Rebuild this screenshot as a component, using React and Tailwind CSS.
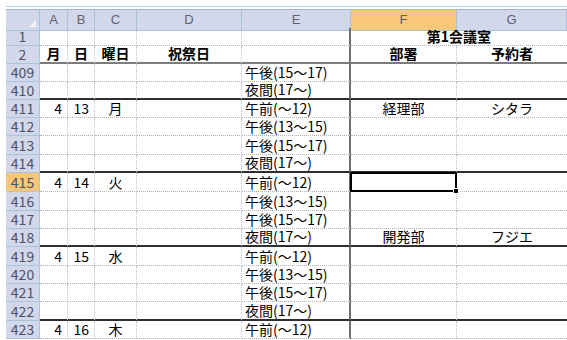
import React from 'react';

const grid = 'grid grid-cols-[34px_28px_27px_42px_105px_109px_106px_1fr]';

const rows = [
    { n: '409', e: '午後(15～17)' },
    { n: '410', e: '夜間(17～)', thick: true },
    { n: '411', a: '4', b: '13', c: '月', e: '午前(～12)', f: '経理部', g: 'シタラ' },
    { n: '412', e: '午後(13～15)' },
    { n: '413', e: '午後(15～17)', tall: true },
    { n: '414', e: '夜間(17～)', thick: true },
    { n: '415', a: '4', b: '14', c: '火', e: '午前(～12)', selected: true, tall: true },
    { n: '416', e: '午後(13～15)', tall: true },
    { n: '417', e: '午後(15～17)' },
    { n: '418', e: '夜間(17～)', f: '開発部', g: 'フジエ', thick: true },
    { n: '419', a: '4', b: '15', c: '水', e: '午前(～12)', tall: true },
    { n: '420', e: '午後(13～15)' },
    { n: '421', e: '午後(15～17)' },
    { n: '422', e: '夜間(17～)', thick: true, tall: true },
    { n: '423', a: '4', b: '16', c: '木', e: '午前(～12)' },
];

function RowHead({ children, active }) {
    return (
        <div
            className={`flex items-end justify-center pb-[2px] leading-none text-[14px] text-[#4c5268] border-r border-b border-[#a9c3dc] ${active ? 'bg-[#f8c777]' : 'bg-[#d3d7ea]'
                }`}
        >
            {children}
        </div>
    );
}

function Cell({ children, align = 'center', bottom, right = 'light', bold, className = '' }) {
    const alignCls = align === 'right' ? 'justify-end pr-[5px]' : align === 'left' ? 'justify-start pl-[3px]' : 'justify-center';
    const bottomCls =
        bottom === 'thick'
            ? 'border-b-2 [border-bottom-style:solid] border-b-[#2e2e2e]'
            : bottom === 'header'
                ? 'border-b-2 [border-bottom-style:solid] border-b-[#7c7c7c]'
                : 'border-b [border-bottom-style:dotted] border-b-[#b2b2b2]';
    const rightCls =
        right === 'dark'
            ? 'border-r-2 [border-right-style:solid] border-r-[#707070]'
            : right === 'none'
                ? ''
                : 'border-r [border-right-style:dotted] border-r-[#b7bfd6]';
    return (
        <div
            className={`relative flex items-end pb-[2px] leading-none whitespace-nowrap ${alignCls} ${bottomCls} ${rightCls} ${bold ? 'font-bold' : ''} ${className}`}
        >
            {children}
        </div>
    );
}

export default function App() {
    return (
        <div className="w-[567px] h-[340px] overflow-hidden bg-white pt-[6px] pl-[6px] text-[14px] text-black font-['Noto_Sans_CJK_JP',sans-serif]">
            <div className="h-px bg-[#a6d6ea]" />
            <div className="h-[2px]" />

            {/* column headers */}
            <div className={`${grid} h-[19px] border-t border-[#a7b3d9] text-[13px] text-[#5d6275] font-['Liberation_Sans',sans-serif]`}>
                <div className="relative bg-[#d3d7ea] border-r border-b border-[#a9c3dc]">
                    <div className="absolute right-[3px] bottom-[3px] w-0 h-0 border-l-[7px] border-l-transparent border-b-[7px] border-b-[#f4f5fb]" />
                </div>
                {['A', 'B', 'C', 'D', 'E', 'F', 'G'].map((c) => (
                    <div
                        key={c}
                        className={`flex items-center justify-center border-r border-b border-[#a9c3dc] ${c === 'F' ? 'bg-[#f8c777]' : 'bg-[#d3d7ea]'
                            }`}
                    >
                        {c}
                    </div>
                ))}
            </div>

            {/* row 1 */}
            <div className={`${grid} h-[18px]`}>
                <RowHead>1</RowHead>
                <Cell />
                <Cell />
                <Cell />
                <Cell />
                <Cell right="dark" />
                <Cell bold right="none" className="col-span-2">第1会議室</Cell>
            </div>

            {/* row 2 */}
            <div className={`${grid} h-[18px]`}>
                <RowHead>2</RowHead>
                <Cell bold bottom="header">月</Cell>
                <Cell bold bottom="header">日</Cell>
                <Cell bold bottom="header">曜日</Cell>
                <Cell bold bottom="header">祝祭日</Cell>
                <Cell bottom="header" right="dark" />
                <Cell bold bottom="header">部署</Cell>
                <Cell bold bottom="header" right="none">予約者</Cell>
            </div>

            {rows.map((r) => {
                const bottom = r.thick ? 'thick' : undefined;
                return (
                    <div key={r.n} className={`${grid} ${r.tall ? 'h-[19px]' : 'h-[18px]'}`}>
                        <RowHead active={r.selected}>{r.n}</RowHead>
                        <Cell align="right" bottom={bottom}>{r.a}</Cell>
                        <Cell align="right" bottom={bottom}>{r.b}</Cell>
                        <Cell bottom={bottom}>{r.c}</Cell>
                        <Cell bottom={bottom} />
                        <Cell align="left" bottom={bottom} right="dark">{r.e}</Cell>
                        <Cell bottom={bottom}>
                            {r.f}
                            {r.selected && (
                                <div className="absolute -left-px -top-px -right-px -bottom-px border-2 border-black z-10">
                                    <div className="absolute -right-[4px] -bottom-[4px] w-[6px] h-[6px] bg-black border border-white" />
                                </div>
                            )}
                        </Cell>
                        <Cell bottom={bottom} right="none">{r.g}</Cell>
                    </div>
                );
            })}
        </div>
    );
}
